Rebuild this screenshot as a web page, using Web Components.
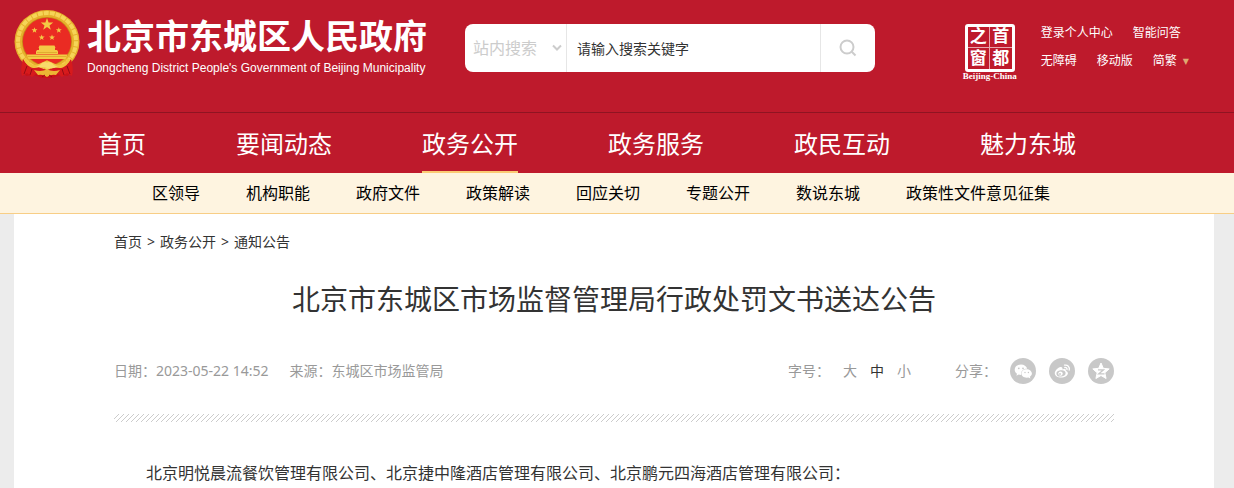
<!DOCTYPE html>
<html lang="zh-CN">
<head>
<meta charset="utf-8">
<meta name="viewport" content="width=device-width, initial-scale=1">
<title>北京市东城区市场监督管理局行政处罚文书送达公告</title>
<style>
    *{box-sizing: border-box;}
    body {
        margin: 0;
        min-height: 100vh;
        background: #ececec;
        color: #333;
        font-family: "Noto Sans", "Noto Sans CJK SC", sans-serif;
        font-size: 14px;
    }
</style>
</head>
<body>
<site-header>
    <site-brand slot="brand"></site-brand>
    <site-search slot="search"></site-search>
    <capital-badge slot="tools"></capital-badge>
    <user-links slot="tools"></user-links>
</site-header>
<main-nav>
    <a href="#">首页</a>
    <a href="#">要闻动态</a>
    <a href="#" class="active">政务公开</a>
    <a href="#">政务服务</a>
    <a href="#">政民互动</a>
    <a href="#">魅力东城</a>
</main-nav>
<sub-nav>
    <a href="#">区领导</a>
    <a href="#">机构职能</a>
    <a href="#">政府文件</a>
    <a href="#">政策解读</a>
    <a href="#">回应关切</a>
    <a href="#">专题公开</a>
    <a href="#">数说东城</a>
    <a href="#">政策性文件意见征集</a>
</sub-nav>
<notice-article>
    <bread-crumb slot="crumb">
        <a href="#">首页</a><span>&gt;</span><a href="#">政务公开</a><span>&gt;</span><a href="#">通知公告</a>
    </bread-crumb>
    <span slot="title">北京市东城区市场监督管理局行政处罚文书送达公告</span>
    <span slot="info">日期：2023-05-22 14:52</span>
    <span slot="info">来源：东城区市场监管局</span>
    <font-sizer slot="actions"></font-sizer>
    <share-bar slot="actions"></share-bar>
    北京明悦晨流餐饮管理有限公司、北京捷中隆酒店管理有限公司、北京鹏元四海酒店管理有限公司：
</notice-article>

<script>
const reset = `*{box-sizing: border-box; margin: 0; padding: 0;}
a{color: inherit; text-decoration: none;}
button, input, select{font: inherit; border: none; outline: none; background: none;}`;

class BaseElement extends HTMLElement {
    constructor() {
        super();
        this.attachShadow({ mode: 'open' });
        this.shadowRoot.innerHTML = `<style>${reset}${this.css()}</style>${this.html()}`;
    }
}

class SiteHeader extends BaseElement {
    css() {
        return `
        :host{display: block; background: #be1a2c; padding: 0 20px 0 14px;}
        header{display: flex; align-items: flex-start; max-width: 1200px; margin: 0 auto; padding-bottom: 31px;}
        .brand{flex: 0 0 auto; padding-top: 9px;}
        .search{flex: 0 1 410px; margin-left: 38px; padding-top: 24px;}
        .tools{display: flex; gap: 24px; margin-left: auto; padding: 19px 25px 0 0;}`;
    }
    html() {
        return `
        <header>
            <div class="brand"><slot name="brand"></slot></div>
            <div class="search"><slot name="search"></slot></div>
            <div class="tools"><slot name="tools"></slot></div>
        </header>`;
    }
}

class SiteBrand extends BaseElement {
    css() {
        return `
        :host{display: block; color: #fff;}
        a{display: flex; gap: 7px;}
        svg{width: 66px; height: 70px; flex: none;}
        strong{display: block; font: bold 34px/51px "Noto Sans CJK SC", sans-serif; white-space: nowrap;}
        small{display: block; font: 12px/16px "Liberation Sans", sans-serif; white-space: nowrap;}`;
    }
    html() {
        const star = 'M0-6.500 1.600-2 6.200-2 2.500.9 3.800 5.300 0 2.600-3.800 5.300-2.500.9-6.200-2-1.600-2Z';
        return `
        <a href="#">
            <svg viewBox="0 0 66 70" aria-hidden="true">
                <path d="M10 49 9 60 12 67 20 66 28 69H38L46 66 54 67 57 60 56 49Z" fill="#c91218"/>
                <ellipse cx="33" cy="32.500" rx="32.500" ry="31.500" fill="#e6b02c"/>
                <ellipse cx="33" cy="32.500" rx="29" ry="28.500" fill="none" stroke="#f6d457" stroke-width="4" stroke-dasharray="5 1"/>
                <ellipse cx="33" cy="32.500" rx="25" ry="24.500" fill="#c98a18"/>
                <ellipse cx="33" cy="32.500" rx="24.200" ry="23.800" fill="#ea2b23"/>
                <g fill="#f3c945">
                    <path d="${star}" transform="translate(33 15.500)"/>
                    <path d="${star}" transform="translate(20.500 21.300) scale(.48)"/>
                    <path d="${star}" transform="translate(44.800 21.300) scale(.48)"/>
                    <path d="${star}" transform="translate(27.700 28.500) scale(.48)"/>
                    <path d="${star}" transform="translate(38 28.500) scale(.48)"/>
                    <path d="M25.500 36.500h15l1 2.500H41v2H25v-2h-.5ZM23 41h20l1 1.500V45H22v-2.500ZM12.500 45.500h41l-2 4.500h-37Z"/>
                </g>
                <path d="M23 43.500h20M14 47.500h38" stroke="#d39a22" stroke-width=".6"/>
                <path d="M9 50Q6 60 8 67L13 64 18 68 23 64 33 67 43 64 48 68 53 64 58 67Q60 60 57 50Q51 60 42 58L33 61 24 58Q15 60 9 50Z" fill="#d71a1c"/>
                <path d="M11 50Q17 61 26 56L33 53 40 56Q49 61 55 50" fill="none" stroke="#f0c33e" stroke-width="3"/>
                <path d="M26 56Q29 52 33 53.500 37 52 40 56L44 58Q38 60 33 59T22 58Z" fill="#f8db6b"/>
                <path d="M20 61Q27 63 33 60.500 39 63 46 61L42 66Q37 65 33 68 29 65 24 66Z" fill="#ecb634"/>
                <path d="M13 57 10 65M53 57 56 65M18 60 16 66M48 60 50 66M28 68 31 66M38 68 35 66" stroke="#930c14" fill="none"/>
            </svg>
            <span>
                <strong>北京市东城区人民政府</strong>
                <small>Dongcheng District People's Government of Beijing Municipality</small>
            </span>
        </a>`;
    }
}

class SiteSearch extends BaseElement {
    css() {
        return `
        :host{display: block;}
        form{display: flex; height: 48px; background: #fff; border-radius: 8px; overflow: hidden;}
        .scope{display: grid; flex: 0 0 102px; align-items: center; border-right: 1px solid #e6e6e6;}
        .scope > *{grid-area: 1 / 1;}
        select{appearance: none; width: 100%; height: 48px; padding-left: 8px; color: #ccc; font-size: 16px;}
        .scope svg{justify-self: end; margin-right: 4px; pointer-events: none;}
        input{flex: 1; min-width: 0; padding: 0 10px; color: #333; font-size: 14px;}
        button{display: grid; place-items: center; flex: 0 0 55px; border-left: 1px solid #e6e6e6; cursor: pointer;}
        svg{fill: none; stroke: #ccc; stroke-width: 2;}`;
    }
    html() {
        return `
        <form>
            <div class="scope">
                <select aria-label="搜索范围"><option>站内搜索</option></select>
                <svg width="10" height="8" viewBox="0 0 10 8"><path d="M1 1.500 5 5.500 9 1.500"/></svg>
            </div>
            <input type="text" aria-label="搜索关键字" value="请输入搜索关键字">
            <button type="submit" aria-label="搜索">
                <svg width="18" height="18" viewBox="0 0 18 18"><circle cx="8" cy="8" r="6.500"/><path d="M12.500 12.500 16.500 16.500"/></svg>
            </button>
        </form>`;
    }
    connectedCallback() {
        this.shadowRoot.querySelector('form').addEventListener('submit', (e) => e.preventDefault());
    }
}

class CapitalBadge extends BaseElement {
    css() {
        return `
        :host{display: block; padding-top: 5px; color: #fff;}
        a{display: grid; justify-items: center;}
        .seal{display: grid; grid-template-columns: 1fr 1fr; grid-template-rows: 1fr 1fr; width: 50px; height: 48px; border: 3px solid #fff; border-radius: 3px;}
        .seal span{display: grid; place-items: center; font: bold 17px/20px "Liberation Serif", "Noto Sans CJK SC", serif;}
        .seal span:nth-child(odd){border-right: 1px solid #e9a5ac;}
        .seal span:nth-child(-n+2){border-bottom: 1px solid #e9a5ac;}
        small{font: bold 9px/9px "Liberation Serif", serif;}`;
    }
    html() {
        return `
        <a href="#">
            <span class="seal"><span>之</span><span>首</span><span>窗</span><span>都</span></span>
            <small>Beijing-China</small>
        </a>`;
    }
}

class UserLinks extends BaseElement {
    css() {
        return `
        :host{display: block; color: #fff; font-size: 12px; line-height: 28px; white-space: nowrap;}
        div{display: flex; gap: 20px;}
        i{color: #dfa871; font: 8px "DejaVu Sans", sans-serif; margin-left: 6px; vertical-align: 1px;}`;
    }
    html() {
        return `
        <div><a href="#">登录个人中心</a><a href="#">智能问答</a></div>
        <div><a href="#">无障碍</a><a href="#">移动版</a><a href="#">简繁<i>▼</i></a></div>`;
    }
}

class MainNav extends BaseElement {
    css() {
        return `
        :host{display: block; background: #be1a2c; border-top: 1px solid #8f1422; padding: 0 20px 0 14px;}
        nav{display: flex; gap: 90px; max-width: 1200px; margin: 0 auto; padding-left: 84px;}
        ::slotted(a){height: 60px; border-bottom: 2px solid transparent; color: #fff; font-size: 24px; line-height: 62px; text-decoration: none; white-space: nowrap;}
        ::slotted(a.active){border-color: #fbcb74;}`;
    }
    html() {
        return `<nav><slot></slot></nav>`;
    }
}

class SubNav extends BaseElement {
    css() {
        return `
        :host{display: block; background: #fef4e0; border-bottom: 1px solid #f8ce86; padding: 0 20px 0 14px;}
        nav{display: flex; gap: 46px; max-width: 1200px; margin: 0 auto; padding-left: 138px;}
        ::slotted(a){color: #000; font-size: 16px; line-height: 40px; text-decoration: none; white-space: nowrap;}`;
    }
    html() {
        return `<nav><slot></slot></nav>`;
    }
}

class BreadCrumb extends BaseElement {
    css() {
        return `
        :host{display: block;}
        nav{display: flex; gap: 5px; line-height: 28px;}
        ::slotted(a){color: #333; text-decoration: none;}`;
    }
    html() {
        return `<nav><slot></slot></nav>`;
    }
}

class NoticeArticle extends BaseElement {
    css() {
        return `
        :host{display: block; padding: 0 20px 0 14px;}
        article{max-width: 1200px; margin: 0 auto; padding: 14px 100px 0; background: #fff;}
        h1{margin-top: 23px; font-size: 28px; font-weight: normal; line-height: 40px; text-align: center;}
        .meta{display: flex; justify-content: space-between; margin-top: 39px; color: #999; line-height: 26px;}
        .info{display: flex; gap: 21px;}
        .actions{display: flex; gap: 44px;}
        .stripe{display: block; width: 100%; height: 8px; margin-top: 30px;}
        p{margin-top: 36px; font-size: 16px; line-height: 30px; text-indent: 2em;}`;
    }
    html() {
        return `
        <article>
            <slot name="crumb"></slot>
            <h1><slot name="title"></slot></h1>
            <div class="meta">
                <div class="info"><slot name="info"></slot></div>
                <div class="actions"><slot name="actions"></slot></div>
            </div>
            <svg class="stripe" aria-hidden="true">
                <pattern id="hatch" width="5" height="5" patternUnits="userSpaceOnUse">
                    <path d="M-1 6 6-1M-1 1 1-1M4 6 6 4" stroke="#ccc"/>
                </pattern>
                <rect width="100%" height="8" fill="url(#hatch)"/>
            </svg>
            <p><slot></slot></p>
        </article>`;
    }
}

class FontSizer extends BaseElement {
    css() {
        return `
        :host{display: flex; gap: 13px;}
        button{color: #999; line-height: 26px; cursor: pointer;}
        button[aria-pressed=true]{color: #333;}`;
    }
    html() {
        return `
        <span>字号：</span>
        <button type="button">大</button>
        <button type="button" aria-pressed="true">中</button>
        <button type="button">小</button>`;
    }
}

class ShareBar extends BaseElement {
    css() {
        return `
        :host{display: flex; gap: 13px;}
        a{width: 26px; height: 26px; border-radius: 50%; background: #c8c8c8;}
        svg{display: block;}`;
    }
    html() {
        return `
        <span>分享：</span>
        <a href="#" aria-label="微信">
            <svg width="26" height="26" viewBox="0 0 26 26">
                <path d="M11 6.500c-3.600 0-6.300 2.300-6.300 5.200 0 1.700.9 3 2.300 4l-.6 2 2.300-1.200 2.400.4C10.700 13 13.500 10.700 17.200 10.800 16.600 8.300 14 6.500 11 6.500Z" fill="#fff"/>
                <path d="M16.600 11.300c-3 0-5.200 2-5.200 4.300s2.200 4.200 5.200 4.200l1.900-.3 1.900 1-.5-1.700c1.200-.8 2-1.900 2-3.200 0-2.300-2.400-4.300-5.300-4.300Z" fill="#fff"/>
                <g fill="#c8c8c8"><circle cx="8.800" cy="10.300" r=".9"/><circle cx="13" cy="10.300" r=".9"/><circle cx="15" cy="14.500" r=".7"/><circle cx="18.400" cy="14.500" r=".7"/></g>
            </svg>
        </a>
        <a href="#" aria-label="微博">
            <svg width="26" height="26" viewBox="0 0 26 26">
                <path d="M11.500 9c-2.400.5-5.700 3.600-5.700 6.300 0 2.600 3 4.300 6.300 4.300 4 0 6.800-2.200 6.800-4.400 0-1.300-1-2-2.100-2.300.6-1.800-.6-2.500-3.300-1.500C13.800 9.700 13 8.700 11.500 9Z" fill="#fff"/>
                <ellipse cx="12" cy="15.400" rx="4.600" ry="3.100" fill="#c8c8c8" transform="rotate(-8 12 15.400)"/>
                <circle cx="11.500" cy="15.600" r="2.200" fill="#fff"/><circle cx="11" cy="16" r=".9" fill="#c8c8c8"/>
                <path d="M15.500 7.200c3-.8 5.600 1.800 4.700 4.900M15.800 9.500c1.500-.3 2.500.8 2.200 2.200" fill="none" stroke="#fff" stroke-width="1.300" stroke-linecap="round"/>
            </svg>
        </a>
        <a href="#" aria-label="QQ空间">
            <svg width="26" height="26" viewBox="0 0 26 26">
                <path d="M13 5 15.300 10.300 21.200 10.900 16.800 14.800 18.100 20.500 13 17.500 7.900 20.500 9.200 14.800 4.800 10.900 10.700 10.300Z" fill="#fff" stroke="#fff" stroke-linejoin="round"/>
                <path d="M10 11.800h5.500L10.800 15.800h5.700" fill="none" stroke="#c8c8c8" stroke-width="1.300"/>
            </svg>
        </a>`;
    }
}

customElements.define('site-header', SiteHeader);
customElements.define('site-brand', SiteBrand);
customElements.define('site-search', SiteSearch);
customElements.define('capital-badge', CapitalBadge);
customElements.define('user-links', UserLinks);
customElements.define('main-nav', MainNav);
customElements.define('sub-nav', SubNav);
customElements.define('bread-crumb', BreadCrumb);
customElements.define('notice-article', NoticeArticle);
customElements.define('font-sizer', FontSizer);
customElements.define('share-bar', ShareBar);
</script>
</body>
</html>
